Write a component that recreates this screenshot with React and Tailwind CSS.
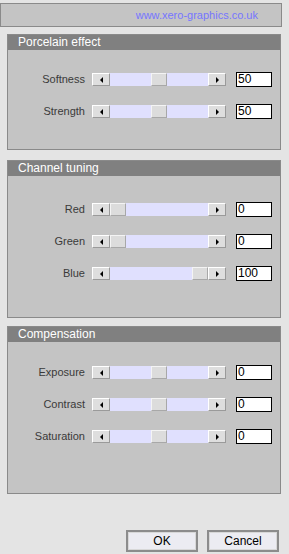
import React from "react";

const panels = [
  {
    title: "Porcelain effect",
    height: "h-[116px]",
    pad: "pt-[22px] gap-[17px]",
    rows: [
      { label: "Softness", value: 50, pos: 50 },
      { label: "Strength", value: 50, pos: 50 },
    ],
  },
  {
    title: "Channel tuning",
    height: "h-[158px]",
    pad: "pt-[26px] gap-[17px]",
    rows: [
      { label: "Red", value: 0, pos: 0 },
      { label: "Green", value: 0, pos: 0 },
      { label: "Blue", value: 100, pos: 100 },
    ],
  },
  {
    title: "Compensation",
    height: "h-[168px]",
    pad: "pt-[23px] gap-[17px]",
    rows: [
      // exposure etc. run -100..100, so 0 sits in the middle
      { label: "Exposure", value: 0, pos: 50 },
      { label: "Contrast", value: 0, pos: 50 },
      { label: "Saturation", value: 0, pos: 50 },
    ],
  },
];

const ArrowButton = ({ dir }) => (
  <div className="w-[18px] h-[13px] flex items-center justify-center bg-[#dedede] border-r border-b border-[#9a9a9a] border-t border-l border-t-white border-l-white shrink-0">
    {dir === "left" ? (
      <div className="w-0 h-0 border-y-[3px] border-y-transparent border-r-[3px] border-r-black" />
    ) : (
      <div className="w-0 h-0 border-y-[3px] border-y-transparent border-l-[3px] border-l-black" />
    )}
  </div>
);

// track is 98px wide, thumb is 16px
const Slider = ({ pos }) => {
  const left = Math.round((pos / 100) * 82);
  return (
    <div className="flex items-center w-[134px] h-[13px]">
      <ArrowButton dir="left" />
      <div className="relative flex-1 h-[13px] bg-[#e0e0fe]">
        <div
          className="absolute top-0 w-[16px] h-[13px] bg-[#dcdcdc] border-r border-b border-[#a8a8a8] border-t border-l border-t-[#f4f4f4] border-l-[#f4f4f4]"
          style={{ left }}
        />
      </div>
      <ArrowButton dir="right" />
    </div>
  );
};

const Row = ({ label, value, pos }) => (
  <div className="flex items-center h-[15px]">
    <div className="w-[78px] text-right text-[11px] text-[#3a3a3a] leading-none pr-[1px]">
      {label}
    </div>
    <div className="ml-[6px]">
      <Slider pos={pos} />
    </div>
    <div className="ml-[10px] w-[36px] h-[15px] bg-white border border-black text-[12px] leading-[13px] pl-[1px] text-black">
      {value}
    </div>
  </div>
);

const Panel = ({ title, height, pad, rows }) => (
  <div className={`ml-[7px] w-[274px] ${height} flex flex-col border border-[#8a8a8a] bg-[#c4c4c4]`}>
    <div className="h-[15px] bg-[#808080] text-white text-[12px] leading-[15px] pl-[10px] shrink-0">
      {title}
    </div>
    <div className={`flex flex-col ${pad}`}>
      {rows.map((r) => (
        <Row key={r.label} {...r} />
      ))}
    </div>
  </div>
);

export default function App() {
  return (
    <div
      className="w-[289px] h-[554px] bg-[#e4e4e4] overflow-hidden flex flex-col"
      style={{ fontFamily: "'Liberation Sans', Arial, sans-serif" }}
    >
      <div className="mt-[3px] w-[282px] h-[24px] shrink-0 border border-[#8a8a8a] bg-[#c4c4c4] flex items-center justify-end pr-[23px]">
        <span className="text-[11px] text-[#7676ff]">www.xero-graphics.co.uk</span>
      </div>

      <div className="mt-[7px] flex flex-col">
        <Panel {...panels[0]} />
        <div className="mt-[10px]">
          <Panel {...panels[1]} />
        </div>
        <div className="mt-[8px]">
          <Panel {...panels[2]} />
        </div>
      </div>

      <div className="mt-[36px] flex justify-end gap-[9px] pr-[10px]">
        {["OK", "Cancel"].map((t) => (
          <button
            key={t}
            className="w-[72px] h-[22px] border-2 border-[#8c8c8c] outline outline-1 -outline-offset-3 outline-[#d8d8d8] bg-[#ececf2] text-[12px] text-black"
          >
            {t}
          </button>
        ))}
      </div>
    </div>
  );
}
